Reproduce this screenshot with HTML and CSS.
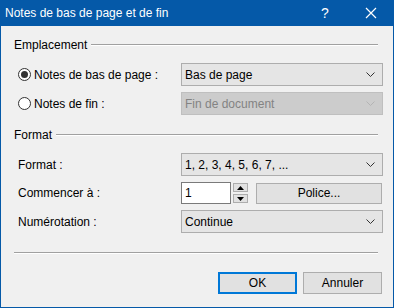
FILE: index.html
```html
<!DOCTYPE html>
<html lang="fr">
<head>
    <meta charset="UTF-8">
    <title>Notes de bas de page et de fin</title>
    <link rel="stylesheet" href="styles.css">
</head>
<body>
    <div class="window">
        <div class="titlebar">
            <span class="title">Notes de bas de page et de fin</span>
            <span class="tb-help">?</span>
            <span class="tb-close">
                <svg width="12" height="12" viewBox="0 0 12 12"><path d="M1 1L11 11M11 1L1 11" stroke="#fff" stroke-width="1.2" fill="none"/></svg>
            </span>
        </div>

        <div class="content">
            <div class="group-head">
                <span>Emplacement</span>
                <div class="rule"></div>
            </div>
            <div class="grid grid-place">
                <label class="radio-label"><span class="radio checked"></span>Notes de bas de page :</label>
                <div class="combo">
                    <span>Bas de page</span>
                    <svg width="9" height="5" viewBox="0 0 9 5"><path d="M0.5 0.5L4.5 4.5L8.5 0.5" stroke="#333" fill="none"/></svg>
                </div>
                <label class="radio-label"><span class="radio"></span>Notes de fin :</label>
                <div class="combo disabled">
                    <span>Fin de document</span>
                    <svg width="9" height="5" viewBox="0 0 9 5"><path d="M0.5 0.5L4.5 4.5L8.5 0.5" stroke="#b4b4b4" fill="none"/></svg>
                </div>
            </div>

            <div class="group-head second">
                <span>Format</span>
                <div class="rule"></div>
            </div>
            <div class="grid grid-format">
                <label class="field-label">Format :</label>
                <div class="combo">
                    <span>1, 2, 3, 4, 5, 6, 7, ...</span>
                    <svg width="9" height="5" viewBox="0 0 9 5"><path d="M0.5 0.5L4.5 4.5L8.5 0.5" stroke="#333" fill="none"/></svg>
                </div>
                <label class="field-label">Commencer à :</label>
                <div class="start-row">
                    <div class="number">1</div>
                    <div class="spin">
                        <div class="spin-btn"><svg width="7" height="4" viewBox="0 0 7 4"><path d="M0 4L3.5 0L7 4Z" fill="#000"/></svg></div>
                        <div class="spin-btn"><svg width="7" height="4" viewBox="0 0 7 4"><path d="M0 0L3.5 4L7 0Z" fill="#000"/></svg></div>
                    </div>
                    <button class="btn police">Police...</button>
                </div>
                <label class="field-label">Numérotation :</label>
                <div class="combo">
                    <span>Continue</span>
                    <svg width="9" height="5" viewBox="0 0 9 5"><path d="M0.5 0.5L4.5 4.5L8.5 0.5" stroke="#333" fill="none"/></svg>
                </div>
            </div>

            <div class="separator"></div>

            <div class="actions">
                <button class="btn default">OK</button>
                <button class="btn">Annuler</button>
            </div>
        </div>
    </div>
</body>
</html>
```

FILE: styles.css
```css
body {
    margin: 0;
    font-family: "Liberation Sans", Arial, sans-serif;
    font-size: 12px;
    color: #000;
    background-color: #f0f0f0;
}
.window {
    width: 394px;
    height: 308px;
    box-sizing: border-box;
    border: 1px solid #0559a8;
    border-top: none;
    background-color: #f0f0f0;
}
.titlebar {
    height: 26px;
    margin: 0 -1px;
    background-color: #0559a8;
    color: #fff;
    display: flex;
    align-items: center;
}
.title {
    flex: 1;
    padding-left: 5px;
    font-size: 12px;
}
.tb-help {
    width: 46px;
    text-align: center;
    font-size: 14px;
}
.tb-close {
    width: 46px;
    display: flex;
    justify-content: center;
    align-items: center;
}
.content {
    padding: 0 10px 0 13px;
}
.group-head {
    display: flex;
    align-items: center;
    height: 14px;
    line-height: 14px;
    margin-top: 12px;
    margin-right: 5px;
}
.group-head.second {
    margin-top: 13px;
}
.group-head .rule {
    flex: 1;
    margin-left: 4px;
    border-top: 1px solid #a0a0a0;
    border-bottom: 1px solid #fff;
}
.grid {
    display: grid;
    grid-template-columns: 163px 202px;
    row-gap: 6px;
    padding-left: 4px;
    margin-top: 11px;
    align-items: center;
}
.grid-place {
    grid-template-rows: 23px 23px;
}
.grid-format {
    grid-template-rows: 23px 22px 23px;
}
.radio-label {
    display: flex;
    align-items: center;
}
.radio {
    width: 13px;
    height: 13px;
    box-sizing: border-box;
    border: 1px solid #333;
    border-radius: 50%;
    background-color: #fff;
    margin-right: 3px;
    display: flex;
    align-items: center;
    justify-content: center;
}
.radio.checked::after {
    content: "";
    width: 7px;
    height: 7px;
    border-radius: 50%;
    background-color: #333;
}
.combo {
    height: 23px;
    box-sizing: border-box;
    border: 1px solid #adadad;
    background-color: #e5e5e5;
    display: flex;
    align-items: center;
    justify-content: space-between;
    padding: 0 7px 0 3px;
}
.combo.disabled {
    background-color: #cccccc;
    border-color: #bfbfbf;
    color: #838383;
}
.start-row {
    display: flex;
    align-items: center;
    height: 22px;
}
.number {
    width: 50px;
    height: 22px;
    box-sizing: border-box;
    border: 1px solid #7a7a7a;
    background-color: #fff;
    padding-left: 3px;
    line-height: 20px;
}
.spin {
    display: flex;
    flex-direction: column;
    gap: 2px;
    margin-left: 2px;
}
.spin-btn {
    width: 15px;
    height: 9px;
    box-sizing: border-box;
    border: 1px solid #adadad;
    background-color: #e1e1e1;
    display: flex;
    align-items: center;
    justify-content: center;
}
.btn {
    font-family: "Liberation Sans", Arial, sans-serif;
    font-size: 12px;
    color: #000;
    height: 22px;
    box-sizing: border-box;
    border: 1px solid #adadad;
    background-color: #e1e1e1;
    padding: 0;
}
.police {
    width: 126px;
    margin-left: 8px;
    height: 21px;
}
.separator {
    margin-top: 19px;
    margin-right: 5px;
    border-top: 1px solid #a0a0a0;
    border-bottom: 1px solid #fff;
}
.actions {
    display: flex;
    justify-content: flex-end;
    gap: 6px;
    margin-top: 18px;
    margin-right: 1px;
}
.actions .btn {
    width: 79px;
}
.btn.default {
    border: 2px solid #0078d7;
}
```
